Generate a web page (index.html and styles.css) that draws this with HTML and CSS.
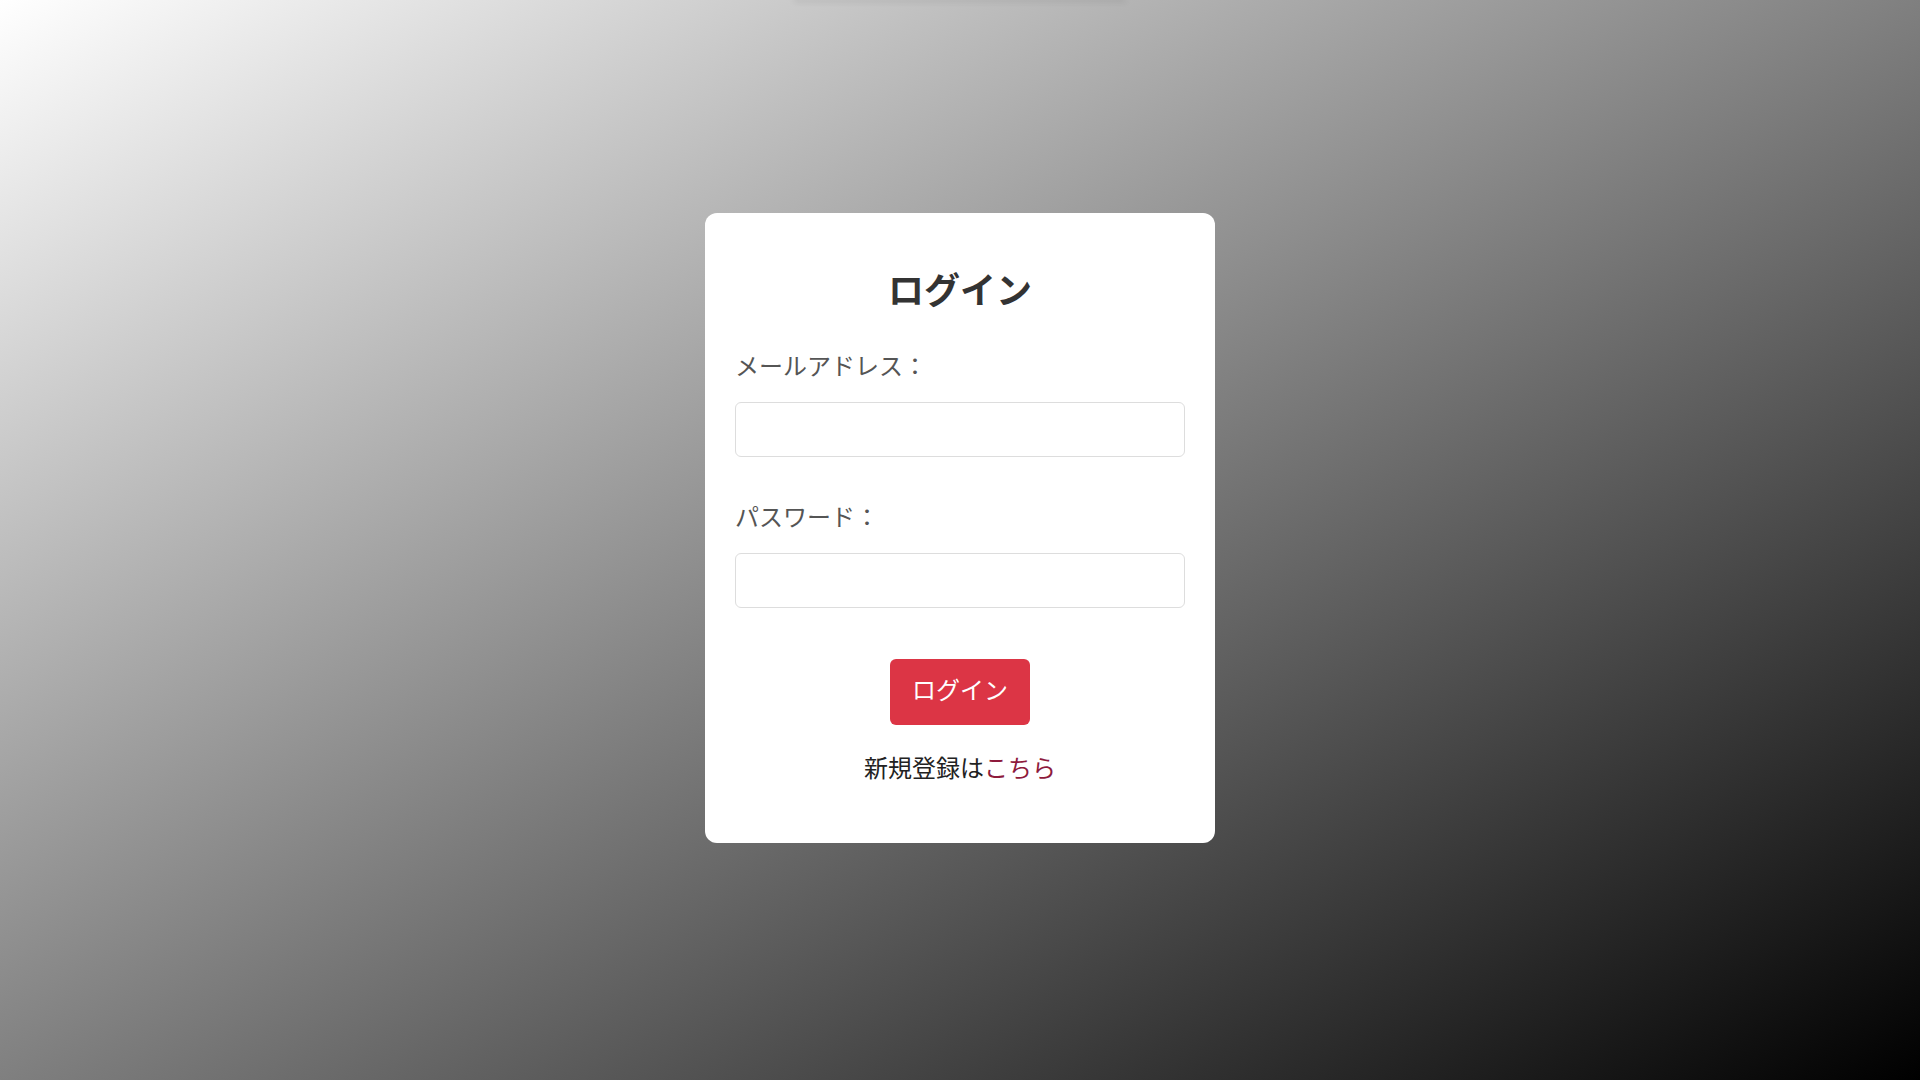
FILE: index.html
```html
<!DOCTYPE html>
<html lang="ja">
<head>
<meta charset="utf-8">
<title>ログイン</title>
<link rel="stylesheet" href="styles.css">
</head>
<body>
<div class="page">
  <div class="topbar"></div>
  <main class="main">
    <form class="card">
      <h2 class="title">ログイン</h2>
      <div class="field">
        <label class="label" for="email">メールアドレス：</label>
        <input class="input" id="email" type="email">
      </div>
      <div class="field field-second">
        <label class="label" for="password">パスワード：</label>
        <input class="input" id="password" type="password">
      </div>
      <div class="actions">
        <button class="btn" type="button">ログイン</button>
      </div>
      <p class="register">新規登録は<a class="link" href="#">こちら</a></p>
    </form>
  </main>
</div>
</body>
</html>
```

FILE: styles.css
```css
* {
  box-sizing: border-box;
}

html, body {
  margin: 0;
  padding: 0;
  height: 100%;
}

body {
  font-family: "Noto Sans CJK JP", "Noto Sans", sans-serif;
  background: linear-gradient(to bottom right, #ffffff, #000000);
}

.page {
  display: flex;
  flex-direction: column;
  height: 100vh;
  overflow: hidden;
}

.topbar {
  align-self: center;
  width: 330px;
  height: 0;
  box-shadow: 0 0 6px 1px rgba(0, 0, 0, 0.18);
}

.main {
  flex: 1;
  display: flex;
  align-items: center;
  justify-content: center;
  padding-bottom: 24px;
}

.card {
  width: 510px;
  background: #ffffff;
  border-radius: 12px;
  padding: 53px 30px 58px;
  display: flex;
  flex-direction: column;
}

.title {
  margin: 0 0 40px;
  font-size: 36px;
  line-height: 44px;
  font-weight: 700;
  color: #333333;
  text-align: center;
}

.field {
  display: flex;
  flex-direction: column;
  gap: 22px;
}

.field-second {
  margin-top: 44px;
}

.label {
  font-size: 24px;
  line-height: 30px;
  color: #555555;
}

.input {
  width: 100%;
  height: 55px;
  border: 1px solid #dddddd;
  border-radius: 6px;
  background: #ffffff;
  font-size: 20px;
  padding: 0 12px;
  margin: 0;
}

.actions {
  margin-top: 51px;
  display: flex;
  justify-content: center;
}

.btn {
  font-family: inherit;
  font-size: 24px;
  line-height: 37px;
  padding: 11px 22px 18px;
  border: none;
  border-radius: 6px;
  background: #dc3545;
  color: #ffffff;
  cursor: pointer;
}

.register {
  margin: 24px 0 0;
  font-size: 24px;
  line-height: 36px;
  text-align: center;
  color: #222222;
}

.link {
  color: #8e1a3c;
  text-decoration: none;
}
```
